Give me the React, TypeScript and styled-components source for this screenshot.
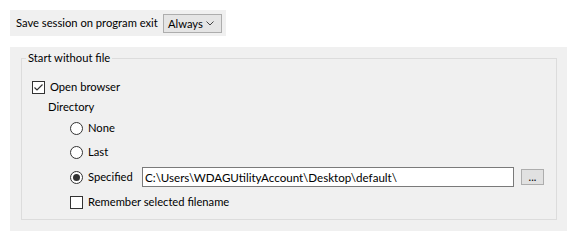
import React from "react";
import styled, { createGlobalStyle } from "styled-components";

const GlobalStyle = createGlobalStyle`
  html, body {
    margin: 0;
    padding: 0;
    background: #ffffff;
  }
  body {
    font-family: Lato, "Liberation Sans", sans-serif;
    font-size: 11.2px;
    color: #000000;
  }
`;

const Page = styled.div`
  width: 577px;
  height: 241px;
  padding: 10px 0 0 10px;
  box-sizing: border-box;
`;

const TopBar = styled.div`
  width: 216px;
  height: 26px;
  background: #f0f0f0;
  display: flex;
  align-items: center;
  justify-content: space-between;
  padding: 0 4px 0 6px;
  box-sizing: border-box;
`;

const Label = styled.span`
  line-height: 16px;
  white-space: nowrap;
`;

const Combo = styled.div`
  width: 59px;
  height: 19px;
  box-sizing: border-box;
  border: 1px solid #adadad;
  background: #e5e5e5;
  display: flex;
  align-items: center;
  justify-content: space-between;
  padding: 0 7px 0 4px;
`;

const Panel = styled.div`
  margin-top: 11px;
  width: 557px;
  height: 184px;
  background: #f0f0f0;
  padding: 3px 10px 11px 11px;
  box-sizing: border-box;
`;

const Group = styled.fieldset`
  margin: 0;
  height: 100%;
  box-sizing: border-box;
  border: 1px solid #dcdcdc;
  padding: 11px 10px 7px 4px;
  display: flex;
  flex-direction: column;
  min-width: 0;
`;

const Legend = styled.legend`
  padding: 0 2px;
  line-height: 16px;
`;

const Row = styled.div<{ $indent: number; $top?: number; $h?: number }>`
  display: flex;
  align-items: center;
  height: ${(p) => p.$h ?? 20}px;
  margin-top: ${(p) => p.$top ?? 0}px;
  margin-left: ${(p) => p.$indent}px;
`;

const Box = styled.span`
  width: 13px;
  height: 13px;
  box-sizing: border-box;
  border: 1px solid #333333;
  background: #ffffff;
  display: inline-flex;
  align-items: center;
  justify-content: center;
  margin-right: 5px;
  flex: none;
`;

const Radio = styled.span<{ $on?: boolean }>`
  width: 13px;
  height: 13px;
  box-sizing: border-box;
  border: 1px solid #333333;
  border-radius: 50%;
  background: #ffffff;
  display: inline-flex;
  align-items: center;
  justify-content: center;
  margin-right: 5px;
  flex: none;
  &::after {
    content: "";
    display: ${(p) => (p.$on ? "block" : "none")};
    width: 7px;
    height: 7px;
    border-radius: 50%;
    background: #333333;
  }
`;

const PathInput = styled.div`
  position: relative;
  width: 372px;
  height: 20px;
  box-sizing: border-box;
  border: 1px solid #7a7a7a;
  background: #ffffff;
  padding-left: 2px;
  display: flex;
  align-items: center;
  white-space: nowrap;
  overflow: hidden;
  font-size: 11.6px;
`;

const SpecifiedLabel = styled(Label)`
  width: 54px;
`;

const BrowseButton = styled.div`
  width: 23px;
  height: 16px;
  box-sizing: border-box;
  border: 1px solid #adadad;
  background: #e1e1e1;
  margin-left: 7px;
  display: flex;
  align-items: center;
  justify-content: center;
  font-size: 11px;
  line-height: 10px;
`;

const Check = () => (
  <svg width="11" height="11" viewBox="0 0 11 11">
    <path d="M1.5 5.5 L4 8 L9.5 2.5" fill="none" stroke="#333" strokeWidth="1.2" />
  </svg>
);

const Chevron = () => (
  <svg width="8" height="5" viewBox="0 0 8 5">
    <path d="M0.5 0.5 L4 4 L7.5 0.5" fill="none" stroke="#444" strokeWidth="1" />
  </svg>
);

export default function App() {
  return (
    <Page>
      <GlobalStyle />
      <TopBar>
        <Label>Save session on program exit</Label>
        <Combo>
          <span>Always</span>
          <Chevron />
        </Combo>
      </TopBar>
      <Panel>
        <Group>
          <Legend>Start without file</Legend>
          <Row $indent={6}>
            <Box>
              <Check />
            </Box>
            <Label>Open browser</Label>
          </Row>
          <Row $indent={22} $h={16} $top={2}>
            <Label>Directory</Label>
          </Row>
          <Row $indent={44} $top={3}>
            <Radio />
            <Label>None</Label>
          </Row>
          <Row $indent={44} $top={4}>
            <Radio />
            <Label>Last</Label>
          </Row>
          <Row $indent={44} $top={5}>
            <Radio $on />
            <SpecifiedLabel>Specified</SpecifiedLabel>
            <PathInput>C:\Users\WDAGUtilityAccount\Desktop\default\</PathInput>
            <BrowseButton>...</BrowseButton>
          </Row>
          <Row $indent={44} $top={5}>
            <Box />
            <Label>Remember selected filename</Label>
          </Row>
        </Group>
      </Panel>
    </Page>
  );
}
